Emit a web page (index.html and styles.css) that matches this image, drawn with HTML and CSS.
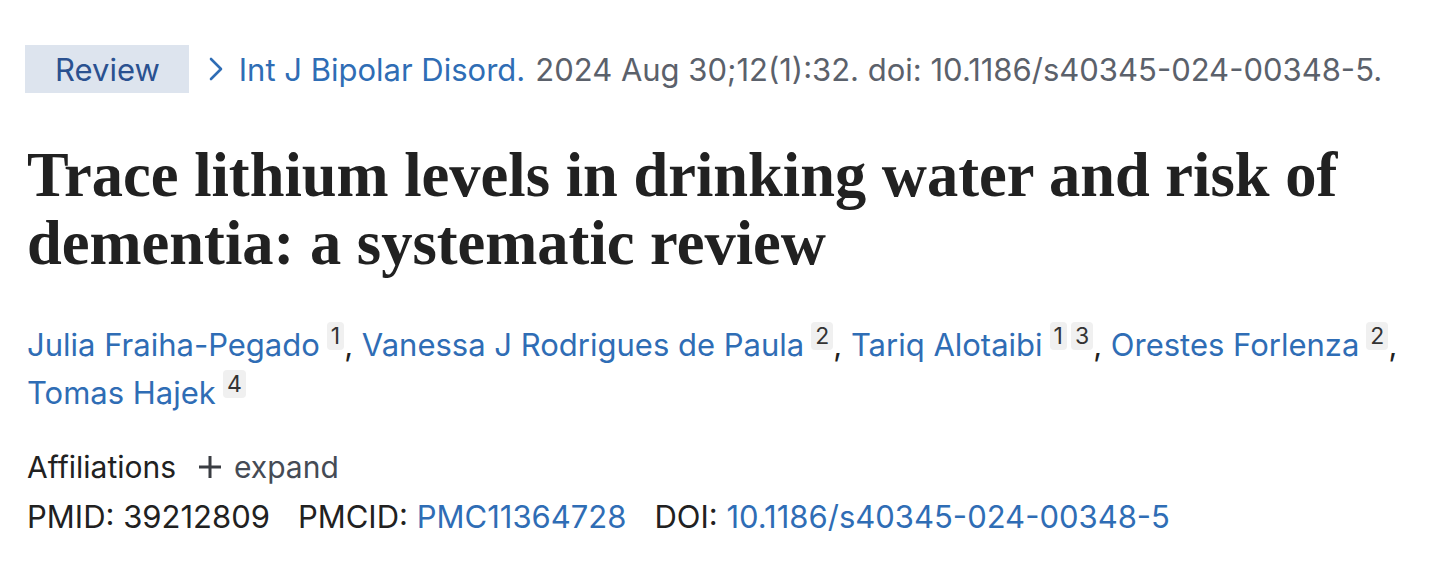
FILE: index.html
```html
<!DOCTYPE html>
<html lang="en">
<head>
<meta charset="utf-8">
<title>Trace lithium levels in drinking water and risk of dementia</title>
<link rel="stylesheet" href="styles.css">
</head>
<body>
<main class="article">
  <div class="citation-row">
    <span class="pub-type">Review</span>
    <span class="citation">
      <svg class="chevron" viewBox="0 0 14 24" width="14" height="24" aria-hidden="true"><polyline points="2,2 12,12 2,22" fill="none" stroke="#2f6db5" stroke-width="2.6" stroke-linecap="round" stroke-linejoin="round"/></svg>
      <a class="journal" href="#">Int J Bipolar Disord.</a>
      <span class="cit">2024 Aug 30;12(1):32. doi: 10.1186/s40345-024-00348-5.</span>
    </span>
  </div>

  <h1 class="title">Trace lithium levels in drinking water and risk of dementia: a systematic review</h1>

  <div class="authors">
    <span class="author"><a href="#">Julia Fraiha-Pegado</a><sup class="aff">1</sup></span>,
    <span class="author"><a href="#">Vanessa J Rodrigues de Paula</a><sup class="aff">2</sup></span>,
    <span class="author"><a href="#">Tariq Alotaibi</a><sup class="aff">1</sup><sup class="aff">3</sup></span>,
    <span class="author"><a href="#">Orestes Forlenza</a><sup class="aff">2</sup></span>,
    <span class="author"><a href="#">Tomas Hajek</a><sup class="aff">4</sup></span>
  </div>

  <div class="affiliations">
    <span class="aff-label">Affiliations</span>
    <span class="expand">
      <svg class="plus" viewBox="0 0 24 24" width="24" height="24" aria-hidden="true"><path d="M12 1v22M1 12h22" stroke="#3a3d42" stroke-width="3" fill="none"/></svg>
      expand
    </span>
  </div>

  <div class="identifiers">
    <span class="id"><span class="id-label">PMID:</span> 39212809</span>
    <span class="id"><span class="id-label">PMCID:</span> <a href="#">PMC11364728</a></span>
    <span class="id"><span class="id-label">DOI:</span> <a href="#">10.1186/s40345-024-00348-5</a></span>
  </div>
</main>
</body>
</html>
```

FILE: styles.css
```css
html, body {
  margin: 0;
  padding: 0;
  background: #ffffff;
}

body {
  font-family: Inter, "Liberation Sans", sans-serif;
  color: #212121;
}

a {
  color: #2f6db5;
  text-decoration: none;
}

.article {
  padding: 45px 25px 0 27px;
}

.citation-row {
  display: flex;
  align-items: center;
  gap: 20px;
  font-size: 31px;
  margin-left: -2px;
}

.pub-type {
  display: inline-flex;
  align-items: center;
  height: 48px;
  padding: 0 29px 0 30px;
  background: #dde4ee;
  color: #2a5190;
}

.citation {
  display: inline-flex;
  align-items: center;
  color: #5b616b;
}

.chevron {
  margin-right: 16px;
}

.journal {
  margin-right: 10px;
}

.title {
  font-family: "Liberation Serif", serif;
  font-weight: 700;
  font-size: 62.5px;
  line-height: 68px;
  color: #212121;
  margin: 48px 0 0;
}

.authors {
  margin-top: 44px;
  font-size: 31px;
  line-height: 48px;
  color: #212121;
}

.aff {
  display: inline-block;
  font-size: 23px;
  line-height: 28px;
  vertical-align: 12px;
  background: #f0f0f0;
  color: #333333;
  border-radius: 4px;
  padding: 0 4px;
  margin-left: 7px;
}

.aff + .aff {
  margin-left: 4px;
}

.affiliations {
  margin-top: 25px;
  display: flex;
  align-items: center;
  gap: 22px;
  font-size: 30px;
  line-height: 50px;
}

.expand {
  display: inline-flex;
  align-items: center;
  gap: 12px;
  color: #454b55;
}

.identifiers {
  display: flex;
  gap: 28px;
  font-size: 31px;
  line-height: 50px;
}
```
